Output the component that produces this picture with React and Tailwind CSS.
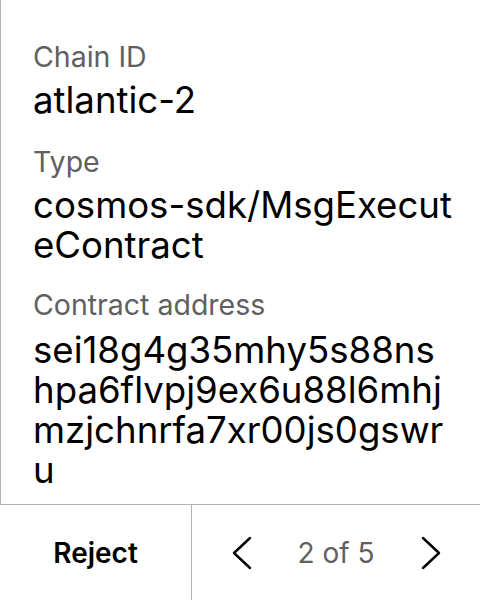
export default function App() {
  const font = { fontFamily: "Inter, 'Noto Sans', sans-serif" };
  return (
    <div className="w-[480px] h-[600px] flex flex-col bg-white overflow-hidden" style={font}>
      <div className="border-l border-[#b3b3b3] h-[504px] shrink-0 pl-8 pr-[28px] pt-[40px] flex flex-col gap-[25px]">
        <div className="flex flex-col">
          <div className="text-[28.5px] leading-[34px] text-[#606060]">Chain ID</div>
          <div className="text-[36.6px] leading-[40px] text-black mt-[6px]">atlantic-2</div>
        </div>
        <div className="flex flex-col">
          <div className="text-[28.5px] leading-[34px] text-[#606060]">Type</div>
          <div className="text-[36.6px] leading-[40px] text-black mt-[6px] break-all">cosmos-sdk/MsgExecuteContract</div>
        </div>
        <div className="flex flex-col">
          <div className="text-[28.5px] leading-[34px] text-[#606060] -mt-[2px]">Contract address</div>
          <div className="text-[36.6px] leading-[40px] text-black mt-[8px] break-all">sei18g4g35mhy5s88nshpa6flvpj9ex6u88l6mhjmzjchnrfa7xr00js0gswru</div>
        </div>
      </div>
      <div className="flex-1 flex border-t border-[#b3b3b3]">
        <div className="w-[192px] shrink-0 border-r border-[#b3b3b3] flex items-center justify-center text-[28px] font-semibold text-black">
          Reject
        </div>
        <div className="flex-1 flex items-center justify-center gap-[46px]">
          <svg width="20" height="34" viewBox="0 0 20 34" fill="none" stroke="black" strokeWidth="2.4" strokeLinecap="round" strokeLinejoin="round">
            <path d="M18 2 L2 17 L18 32" />
          </svg>
          <span className="text-[28px] text-[#606060]">2 of 5</span>
          <svg width="20" height="34" viewBox="0 0 20 34" fill="none" stroke="black" strokeWidth="2.4" strokeLinecap="round" strokeLinejoin="round">
            <path d="M2 2 L18 17 L2 32" />
          </svg>
        </div>
      </div>
    </div>
  );
}
